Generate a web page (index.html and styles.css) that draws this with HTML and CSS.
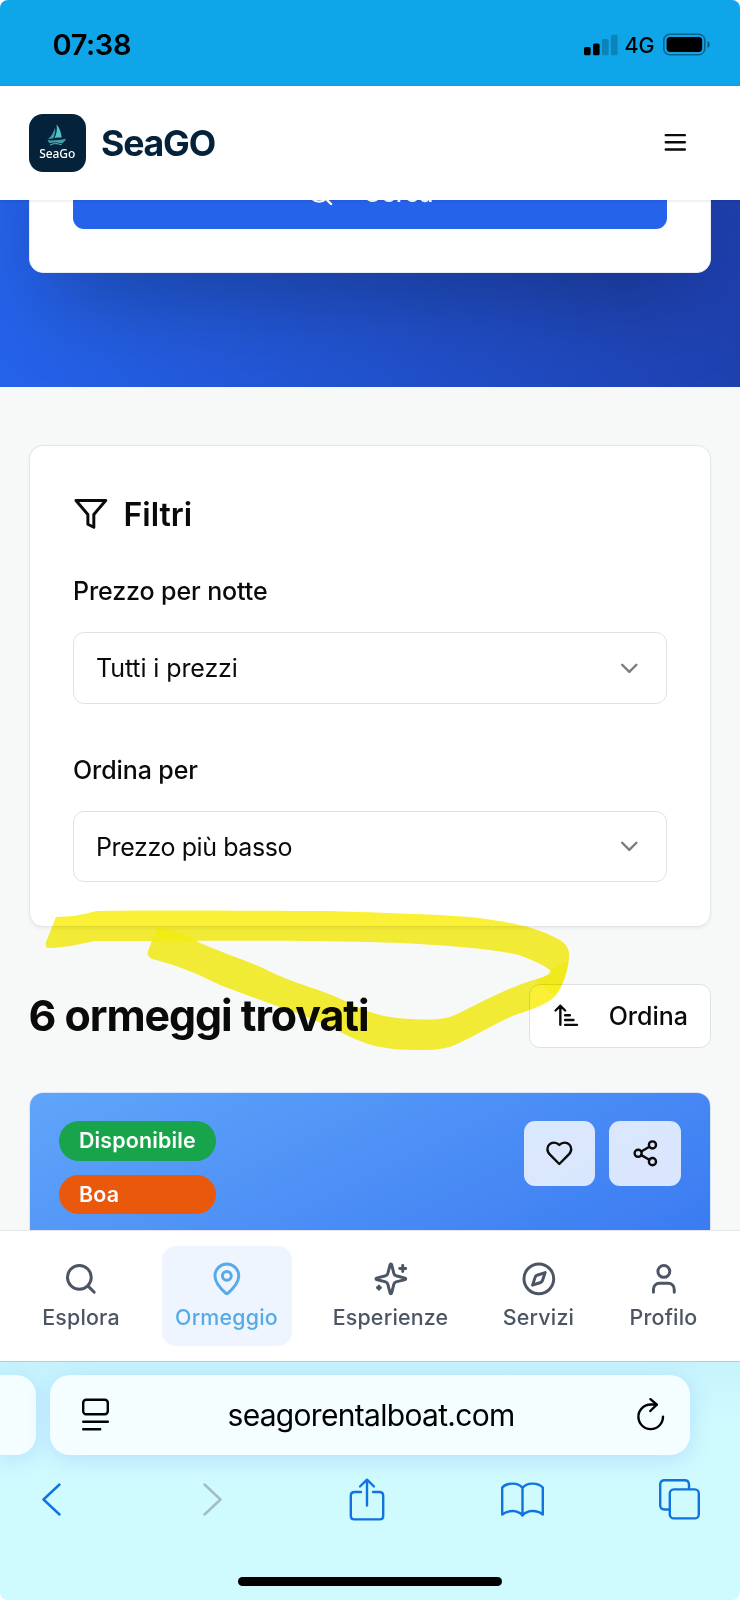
FILE: index.html
```html
<!DOCTYPE html>
<html lang="it">
<head>
<meta charset="utf-8">
<title>SeaGO</title>
<link rel="stylesheet" href="styles.css">
</head>
<body>
<div class="phone">
  <div class="status">
    <span class="clock">07:38</span>
    <div class="indicators">
      <svg width="34" height="22" viewBox="0 0 34 22"><rect x="0" y="13" width="6.6" height="8.3" rx="1.6"/><rect x="9" y="9.5" width="6.6" height="11.8" rx="1.6"/><g opacity=".2"><rect x="18" y="5" width="6.6" height="16.3" rx="1.6"/><rect x="27" y="0.7" width="6.6" height="20.6" rx="1.6"/></g></svg>
      <span class="network">4G</span>
      <svg width="48" height="23" viewBox="0 0 48 23"><rect x=".8" y="1.3" width="41" height="20.4" rx="6" fill="none" stroke="#000" stroke-opacity=".4" stroke-width="1.6"/><rect x="3.6" y="4.1" width="35.6" height="14.8" rx="3.6"/><path d="M44.5 8.3c3 .9 3 5.500 0 6.400z" opacity=".45"/></svg>
    </div>
  </div>

  <header class="header">
    <div class="logo">
      <svg width="20" height="23" viewBox="0 0 20 23"><path d="M8 3.500C7 8 4.500 12 1 15.200c2-.3 3.600-.6 5.300-1C8 10.800 8.700 7.500 8 3.500z" fill="#3f9fa6"/><path d="M9.500.3c.8 5 .2 9.500-2 13.600 2.500-.4 4.800-.5 7.200-.4C14.200 8.500 12.500 3.500 9.500.3z" fill="#56c3c4"/><path d="M.5 16.300c6 .3 12-.1 18.500-1.600-1 2.500-2.500 4-4.300 4.800C10 17.800 5 18.500 2.500 19 1.500 18.200 1 17.300.5 16.300z" fill="#3f9fa6"/><path d="M3 21c4-2 7-1.600 11.500-.3" fill="none" stroke="#56c3c4" stroke-width="1"/></svg>
      <span class="logo-text">SeaGo</span>
    </div>
    <span class="brand">SeaGO</span>
    <svg class="ico menu" viewBox="0 0 24 24"><path d="M4 6h16M4 12h16M4 18h16"/></svg>
  </header>

  <main class="page">
    <section class="hero">
      <div class="search-card">
        <div class="search-btn">
          <svg class="ico" viewBox="0 0 24 24"><circle cx="11" cy="11" r="8"/><path d="m21 21-4.300-4.300"/></svg>
          <span>Cerca</span>
        </div>
      </div>
    </section>

    <section class="filters">
      <h3 class="filters-title">
        <svg class="ico lg" viewBox="0 0 24 24"><path d="M22 3H2l8 9.460V19l4 2v-8.540L22 3z"/></svg>
        <span>Filtri</span>
      </h3>
      <div class="label">Prezzo per notte</div>
      <div class="select"><span>Tutti i prezzi</span><svg class="ico chev" viewBox="0 0 24 24"><path d="m6 9 6 6 6-6"/></svg></div>
      <div class="label second">Ordina per</div>
      <div class="select"><span class="tight">Prezzo più basso</span><svg class="ico chev" viewBox="0 0 24 24"><path d="m6 9 6 6 6-6"/></svg></div>
    </section>

    <div class="results-head">
      <h2>6 ormeggi trovati</h2>
      <div class="sort-btn">
        <svg class="ico" viewBox="0 0 24 24"><path d="m3 8 4-4 4 4M7 4v16M11 12h4M11 16h7M11 20h10"/></svg>
        <span>Ordina</span>
      </div>
    </div>

    <article class="berth">
      <div class="berth-cover">
        <div class="badges">
          <span class="badge green">Disponibile</span>
          <span class="badge orange">Boa</span>
        </div>
        <div class="actions">
          <span class="action"><svg class="ico" viewBox="0 0 24 24"><path d="M19 14c1.490-1.460 3-3.210 3-5.500A5.500 5.500 0 0 0 16.500 3c-1.760 0-3 .5-4.500 2-1.500-1.500-2.740-2-4.500-2A5.500 5.500 0 0 0 2 8.500c0 2.300 1.500 4.050 3 5.500l7 7Z"/></svg></span>
          <span class="action"><svg class="ico" viewBox="0 0 24 24"><circle cx="18" cy="5" r="3"/><circle cx="6" cy="12" r="3"/><circle cx="18" cy="19" r="3"/><path d="m8.590 13.510 6.830 3.980M15.410 6.510l-6.820 3.980"/></svg></span>
        </div>
      </div>
    </article>

    <svg class="marker" width="740" height="180" viewBox="0 890 740 180">
      <path fill="#faf136" d="M56 917C72 917 84 914 97 911C180 910 260 911 330 911C385 913 430 914 470 917C505 921 532 926 552 936C566 942 570 948 569 958C568 972 562 988 555 996C550 1002 540 1007 515 1015C500 1021 480 1033 455 1045C442 1050 430 1050 420 1050C400 1050 385 1049 368 1044C350 1038 325 1024 300 1014C275 1005 240 993 220 985C195 973 180 966 152 959C148 957 147 955 148 951L157 928C170 928 178 931 200 943C225 954 250 961 275 974C300 985 320 989 345 1001C365 1012 385 1018 410 1019C432 1020 443 1020 455 1015C480 1003 505 989 530 981C540 978 551 975 551 972C550 968 530 958 515 954C490 949 440 944 370 942C280 940 180 941 95 941C80 944 65 948 49 948C46 948 45 945 46 942Z"/>
      <path fill="#f7f000" fill-opacity=".55" d="M157 928C170 928 178 931 197 941L152 941Z"/>
      <path fill="#f7f000" fill-opacity=".45" d="M551 970L568 960C567 975 562 988 555 996L535 980Q548 977 551 970Z"/>
    </svg>
  </main>

  <nav class="tabs">
    <div class="tab w1"><svg class="ico lg" viewBox="0 0 24 24"><circle cx="11" cy="11" r="8"/><path d="m21 21-4.300-4.300"/></svg><span>Esplora</span></div>
    <div class="tab w2 active"><svg class="ico lg" viewBox="0 0 24 24"><path d="M20 10c0 4.990-5.540 10.190-7.400 11.800a1 1 0 0 1-1.200 0C9.540 20.190 4 14.990 4 10a8 8 0 0 1 16 0"/><circle cx="12" cy="10" r="3"/></svg><span>Ormeggio</span></div>
    <div class="tab w3"><svg class="ico lg" viewBox="0 0 24 24"><path d="M9.937 15.500A2 2 0 0 0 8.500 14.063l-6.135-1.582a.5.5 0 0 1 0-.962L8.500 9.936A2 2 0 0 0 9.937 8.500l1.582-6.135a.5.5 0 0 1 .963 0L14.063 8.500A2 2 0 0 0 15.500 9.937l6.135 1.581a.5.5 0 0 1 0 .964L15.500 14.063a2 2 0 0 0-1.437 1.437l-1.582 6.135a.5.5 0 0 1-.963 0zM20 3v4M22 5h-4M4 17v2M5 18H3"/></svg><span>Esperienze</span></div>
    <div class="tab w4"><svg class="ico lg" viewBox="0 0 24 24"><circle cx="12" cy="12" r="10"/><path d="m16.240 7.760-1.804 5.411a2 2 0 0 1-1.265 1.265L7.760 16.240l1.804-5.411a2 2 0 0 1 1.265-1.265z"/></svg><span>Servizi</span></div>
    <div class="tab w5"><svg class="ico lg" viewBox="0 0 24 24"><path d="M19 21v-2a4 4 0 0 0-4-4H9a4 4 0 0 0-4 4v2"/><circle cx="12" cy="7" r="4"/></svg><span>Profilo</span></div>
  </nav>

  <footer class="safari">
    <div class="url-row">
      <div class="prev-tab"></div>
      <div class="url">
        <svg width="27" height="33" viewBox="0 0 27 33" class="line"><rect x="1.200" y="1.700" width="24.600" height="14.600" rx="3"/><path d="M1.200 23.800h24.600M1.200 31.300h17"/></svg>
        <span class="url-text">seagorentalboat.com</span>
        <svg width="28" height="34" viewBox="0 0 28 34" class="line"><path d="M26 18.800A12.300 12.300 0 1 1 13.700 6.500H19.500"/><path d="m13.500 1.200 6.300 5.500-6.500 6.300"/></svg>
      </div>
    </div>
    <div class="tools">
      <svg width="19" height="33" viewBox="0 0 19 33"><path d="M17.500 1.500 1.500 16.500l16 15"/></svg>
      <svg class="off" width="19" height="33" viewBox="0 0 19 33"><path d="m1.500 1.500 16 15-16 15"/></svg>
      <svg width="36" height="43" viewBox="0 0 36 43"><path d="M12 14H5.500Q1.800 14 1.800 17.700V37.700Q1.800 41.400 5.500 41.400H30.500Q34.200 41.400 34.200 37.700V17.700Q34.200 14 30.500 14H24M18 27.500V2M11 8.500 18 1.700l7 6.800"/></svg>
      <svg width="43" height="35" viewBox="0 0 43 35"><path d="M21.500 6C17.500.2 6 .2 1.200 5.500V32.500C7.500 27.500 17 28 21.500 33.500V6C25.500.2 37 .2 41.800 5.500V32.500C35.500 27.500 26 28 21.500 33.500"/></svg>
      <svg width="41" height="41" viewBox="0 0 41 41"><rect x="10.800" y="10.400" width="29" height="29" rx="4"/><path d="M10.500 30.500H5.500Q1.200 30.500 1.200 26V5.700Q1.200 1.200 5.700 1.200H25.500Q30 1.200 30 5.700V10"/></svg>
    </div>
    <div class="home"></div>
  </footer>
</div>
</body>
</html>
```
FILE: styles.css
```css
* { box-sizing: border-box; }

body {
  margin: 0;
  background: #fff;
  font-family: Inter, "Liberation Sans", sans-serif;
  color: #0a0a0a;
}

h2, h3 { margin: 0; }
svg { display: block; flex: none; }

.phone {
  width: 740px;
  height: 1600px;
  display: flex;
  flex-direction: column;
  overflow: hidden;
  border-radius: 8px;
}

.ico {
  width: 28.6px;
  height: 28.6px;
  fill: none;
  stroke: currentColor;
  stroke-width: 2;
  stroke-linecap: round;
  stroke-linejoin: round;
}
.ico.lg { width: 35.7px; height: 35.7px; }

/* status bar */
.status {
  height: 85.500px;
  flex: none;
  background: #0fa5e9;
  padding: 4px 29.500px 0 52.500px;
  display: flex;
  align-items: center;
  justify-content: space-between;
  color: #000;
}
.clock { font-size: 29px; font-weight: 600; letter-spacing: -0.4px; }
.indicators { display: flex; align-items: center; }
.network { font-size: 21.500px; font-weight: 500; width: 45px; padding-left: 7px; }

/* site header */
.header {
  height: 114.500px;
  flex: none;
  background: #fff;
  padding: 0 50px 0 28.500px;
  display: flex;
  align-items: center;
  position: relative;
  z-index: 2;
  box-shadow: 0 1px 3px rgba(0, 0, 0, .1);
}
.logo {
  width: 57.500px;
  height: 57.500px;
  border-radius: 14px;
  background: #04223a;
  display: flex;
  flex-direction: column;
  align-items: center;
  padding-top: 10px;
}
.logo-text {
  font: 500 12px/15px "Noto Sans", sans-serif;
  letter-spacing: -0.1px;
  color: #fff;
  margin-top: -1px;
}
.brand {
  margin-left: 15px;
  font-size: 35.700px;
  font-weight: 700;
  letter-spacing: -1.200px;
  color: #04223a;
}
.menu { margin-left: auto; }

/* page */
.page {
  height: 1030px;
  flex: none;
  overflow: hidden;
  background: #f7f9f9;
  position: relative;
}
.hero {
  height: 187px;
  overflow: hidden;
  background: linear-gradient(85deg, #2563eb, #1e40af);
  padding: 0 29.500px 114px 28.500px;
  display: flex;
  flex-direction: column;
  justify-content: flex-end;
}
.search-card {
  flex: none;
  background: #fff;
  border: 1.500px solid #e8edf5;
  border-radius: 14px;
  padding: 43px;
  box-shadow: 0 45px 89px -21px rgba(0, 0, 0, .27);
}
.search-btn {
  height: 71.500px;
  border-radius: 11px;
  background: #2563eb;
  color: #fff;
  display: flex;
  align-items: center;
  justify-content: center;
  gap: 28.600px;
  font-size: 25px;
  font-weight: 500;
  letter-spacing: -0.2px;
}

.filters {
  margin: 58px 29.500px 0 28.500px;
  height: 482px;
  border: 1.500px solid #e4e6e7;
  border-radius: 14px;
  background: #fff;
  box-shadow: 0 1.800px 3.600px rgba(0, 0, 0, .05);
  padding: 50px 43px 0 43.500px;
}
.filters-title {
  display: flex;
  align-items: center;
  gap: 14.800px;
  height: 36px;
  font-size: 32px;
  font-weight: 600;
}
.label {
  margin-top: 47px;
  font-size: 25px;
  line-height: 25px;
  font-weight: 500;
  letter-spacing: -0.1px;
}
.label.second { margin-top: 54px; }
.select {
  margin-top: 28px;
  height: 71.500px;
  border: 1.500px solid #e0e1e3;
  border-radius: 11px;
  padding: 1px 22px 0;
  display: flex;
  align-items: center;
  justify-content: space-between;
  font-size: 25px;
  letter-spacing: -0.1px;
}
.tight { letter-spacing: -0.4px; }
.chev { color: #7c7c7e; }

.results-head {
  margin: 57px 29.500px 0 28.500px;
  display: flex;
  align-items: center;
  justify-content: space-between;
}
.results-head h2 {
  font-size: 42.900px;
  line-height: 50px;
  font-weight: 700;
  letter-spacing: -1.050px;
  margin-top: -2px;
}
.sort-btn {
  width: 182px;
  height: 63.500px;
  border: 1.500px solid #e0e1e3;
  border-radius: 11px;
  background: #fff;
  display: flex;
  align-items: center;
  padding-left: 22px;
  gap: 28.600px;
  font-size: 25px;
  font-weight: 500;
}

.berth {
  margin: 44.500px 29.500px 0 28.500px;
  border: 1.500px solid #d9e6f7;
  border-radius: 14px;
  overflow: hidden;
}
.berth-cover {
  height: 343px;
  padding: 28px 28.600px 0 29.500px;
  background: linear-gradient(to bottom right, #60a5fa, #2b69ee);
  display: flex;
  justify-content: space-between;
  align-items: flex-start;
}
.badges { display: flex; flex-direction: column; gap: 14px; }
.badge {
  width: 157px;
  height: 39.500px;
  border-radius: 20px;
  padding-left: 20px;
  font-size: 21.400px;
  line-height: 39px;
  font-weight: 600;
  letter-spacing: 0.150px;
  color: #fff;
}
.green { background: #17a44a; }
.orange { background: #ea580c; }
.actions { display: flex; gap: 14.300px; }
.action {
  width: 71.500px;
  height: 64.500px;
  border-radius: 11px;
  background: rgba(255, 255, 255, .8);
  display: flex;
  align-items: center;
  justify-content: center;
}

/* highlighter stroke lying over the page */
.marker {
  position: absolute;
  left: 0;
  top: 690px;
  mix-blend-mode: multiply;
}

/* bottom navigation */
.tabs {
  height: 131px;
  flex: none;
  background: #fff;
  border-top: 1.500px solid #e3e6ea;
  padding: 15px 28.500px 0;
  display: flex;
  justify-content: space-between;
  color: #4b5563;
  position: relative;
}
.tab {
  height: 100px;
  border-radius: 14px;
  padding-top: 14.500px;
  display: flex;
  flex-direction: column;
  align-items: center;
  font-size: 21.400px;
  line-height: 28px;
  font-weight: 450;
  letter-spacing: 0.200px;
}
.tab span { margin-top: 6.500px; }
.w1 { width: 105px; }
.w2 { width: 130px; }
.w3 { width: 142px; }
.w4 { width: 98px; }
.w5 { width: 96px; }
.tab.active { background: #eff5ff; color: #56abe6; }

/* browser chrome */
.safari {
  flex: 1;
  background: linear-gradient(#c6f3fc, #cffafe 60px);
  border-top: 1.500px solid #a6d3de;
  display: flex;
  flex-direction: column;
  align-items: center;
}
.url-row {
  width: 740px;
  margin-top: 12.500px;
  display: flex;
  gap: 14.500px;
}
.prev-tab, .url {
  height: 80.500px;
  background: #f4fdff;
  box-shadow: 0 4px 22px rgba(120, 170, 255, .32);
}
.prev-tab { width: 35.500px; border-radius: 0 20px 20px 0; }
.url {
  width: 640px;
  border-radius: 20px;
  padding: 0 25px 0 32px;
  display: flex;
  align-items: center;
  justify-content: space-between;
}
.line { fill: none; stroke: #000; stroke-width: 2.400; stroke-linecap: round; stroke-linejoin: round; }
.url-text { font-size: 30px; color: #000; letter-spacing: -0.700px; margin-right: 4px; }
.tools {
  width: 740px;
  height: 60px;
  margin-top: 14.500px;
  padding-left: 41.500px;
  display: grid;
  grid-template-columns: 161px 146px 152px 158px 1fr;
  align-items: center;
}
.tools svg { fill: none; stroke: #1173e0; stroke-width: 2.400; stroke-linecap: round; stroke-linejoin: round; }
.tools .off { stroke: #a5bcc4; }
.home {
  width: 264px;
  height: 9px;
  border-radius: 5px;
  background: #000;
  margin-top: 47.500px;
}
```
